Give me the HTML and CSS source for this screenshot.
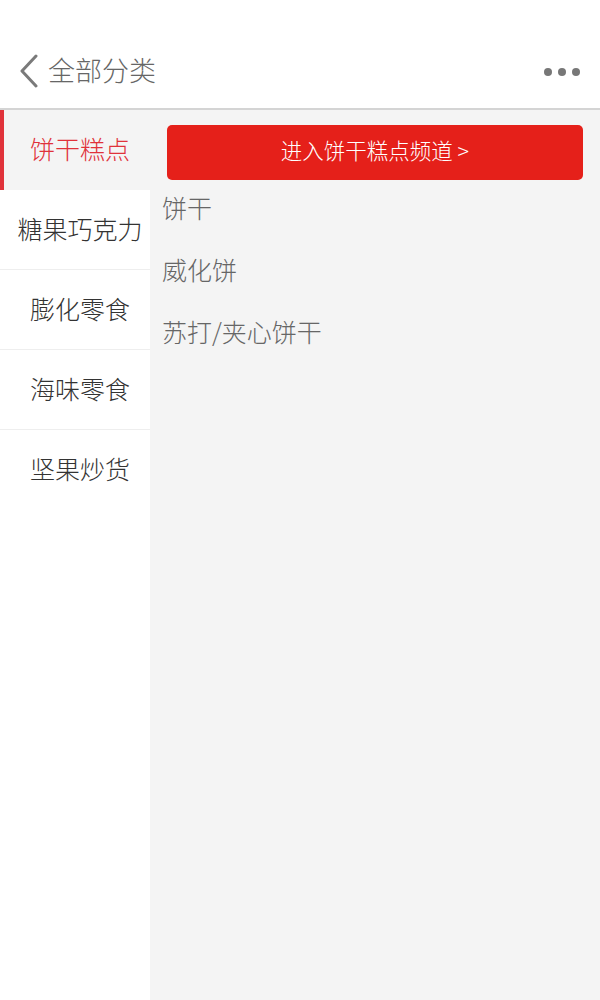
FILE: index.html
```html
<!DOCTYPE html>
<html lang="zh-CN">
<head>
  <meta charset="UTF-8">
  <title>全部分类</title>
  <link rel="stylesheet" href="styles.css">
</head>
<body>

<div class="header">
  <div class="header-left">
    <svg class="back" width="22" height="34" viewBox="0 0 22 34">
      <polyline points="18,2 4,17 18,32" fill="none" stroke="#7a7a7a" stroke-width="3" stroke-linecap="round" stroke-linejoin="round"/>
    </svg>
    <span class="title">全部分类</span>
  </div>
  <div class="more">
    <span></span><span></span><span></span>
  </div>
</div>

<div class="main">
  <ul class="sidebar">
    <li class="active">饼干糕点</li>
    <li>糖果巧克力</li>
    <li>膨化零食</li>
    <li>海味零食</li>
    <li>坚果炒货</li>
  </ul>

  <div class="content">
    <a class="channel-btn">进入饼干糕点频道 &gt;</a>
    <ul class="sub-list">
      <li>饼干</li>
      <li>威化饼</li>
      <li>苏打/夹心饼干</li>
    </ul>
  </div>
</div>

</body>
</html>
```

FILE: styles.css
```css
* {
  box-sizing: border-box;
}

html, body {
  height: 100%;
}

body {
  margin: 0;
  font-family: "Noto Sans CJK SC", "Noto Sans", sans-serif;
  font-weight: 300;
  background-color: #fff;
  display: flex;
  flex-direction: column;
}

ul {
  list-style: none;
  margin: 0;
  padding: 0;
}

.header {
  height: 110px;
  padding: 36px 18px 0 18px;
  border-bottom: 2px solid #d4d4d4;
  display: flex;
  justify-content: space-between;
  align-items: flex-start;
}

.header-left {
  height: 70px;
  display: flex;
  align-items: center;
  gap: 8px;
}

.back {
  display: block;
}

.title {
  font-size: 27px;
  color: #666;
  padding-bottom: 3px;
}

.more {
  height: 72px;
  display: flex;
  align-items: center;
  gap: 6px;
  margin-right: 2px;
}

.more span {
  width: 8px;
  height: 8px;
  border-radius: 50%;
  background-color: #777;
}

.main {
  flex: 1;
  display: flex;
}

.sidebar {
  width: 150px;
  background-color: #fff;
}

.sidebar li {
  height: 80px;
  padding: 0 0 4px 10px;
  display: flex;
  align-items: center;
  justify-content: center;
  font-size: 25px;
  color: #333;
  border-bottom: 1px solid #eee;
}

.sidebar li:last-child {
  border-bottom: none;
}

.sidebar li.active {
  background-color: #f4f4f4;
  color: #e0323a;
  border-left: 4px solid #e0323a;
  padding-left: 6px;
  border-bottom: none;
}

.content {
  flex: 1;
  background-color: #f4f4f4;
  padding: 15px 17px 0 12px;
}

.channel-btn {
  display: flex;
  align-items: center;
  justify-content: center;
  height: 55px;
  margin-left: 5px;
  padding-bottom: 7px;
  background-color: #e5201a;
  border-radius: 5px;
  color: #fff;
  font-size: 21.5px;
}

.sub-list {
  margin-top: -2px;
}

.sub-list li {
  height: 62px;
  line-height: 58px;
  font-size: 25px;
  color: #666;
}
```
